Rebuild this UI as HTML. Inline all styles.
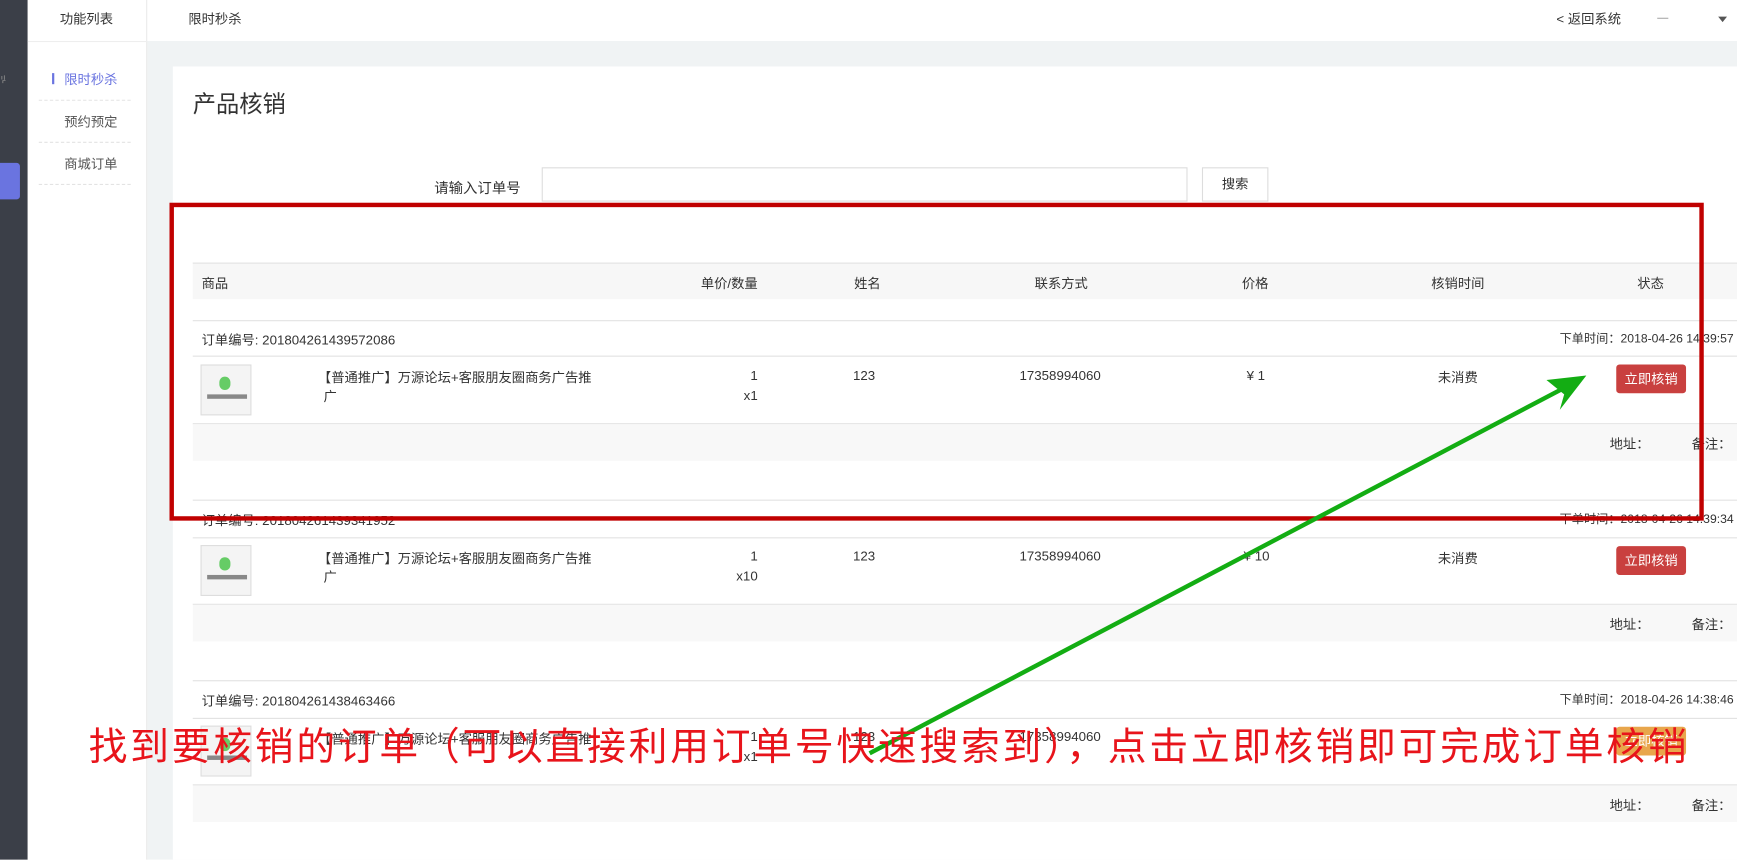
<!DOCTYPE html>
<html><head><meta charset="utf-8">
<style>
*{margin:0;padding:0;box-sizing:border-box}
html,body{width:1737px;height:860px;overflow:hidden;background:#fff}
#w{position:absolute;left:0;top:0;width:1568px;height:776px;transform:scale(1.10778);transform-origin:0 0;font-family:"Liberation Sans","Noto Sans CJK SC",sans-serif;font-size:12px;color:#333}
.a{position:absolute;white-space:nowrap}
.sb{left:0;top:0;width:25px;height:776px;background:#3b3f48}
.sn{left:25px;top:0;width:108px;height:776px;background:#fff;border-right:1px solid #e8e8e8}
.top{left:133px;top:0;width:1435px;height:37px;background:#fff}
.bg{left:133px;top:37px;width:1435px;height:739px;background:#f0f3f4}
.panel{left:156px;top:60px;width:1412px;height:716px;background:#fff}
.dash{position:absolute;left:35px;width:83px;border-top:1px dashed #e3e3e3}
.th{left:174px;top:237px;width:1394px;height:33px;background:#f7f7f7;border-top:1px solid #e2e2e2}
.hl{position:absolute;left:174px;width:1394px;border-top:1px solid #e2e2e2}
.ft{position:absolute;left:174px;width:1394px;height:33px;background:#f8f8f8}
.img{position:absolute;left:181px;width:46px;height:46px;border:1px solid #ddd;background:#f4f4f4}
.img i{position:absolute;left:16px;top:10px;width:10px;height:12px;border-radius:5px;background:#6c6}
.img b{position:absolute;left:5px;top:26px;width:36px;height:4px;background:#888}
.btn{position:absolute;left:1459px;width:63px;height:26px;background:#c9403f;border-radius:3px;color:#fff;text-align:center;line-height:26px}
.c{transform:translateX(-50%)}
.r{transform:translateX(-100%)}
</style></head><body><div id="w">
<div class="a sb"></div>
<div class="a" style="left:0;top:147px;width:18px;height:33px;background:#6a74e0;border-radius:0 3px 3px 0"></div>
<div class="a" style="left:0;top:65px;width:5px;height:10px;color:#888;font-size:11px;overflow:hidden">览</div>
<div class="a sn"></div>
<div class="a" style="left:25px;top:37px;width:108px;border-top:1px solid #eee"></div>
<div class="a" style="left:54px;top:8px;font-size:12px">功能列表</div>
<div class="a" style="left:47px;top:66px;width:2px;height:10px;background:#6a74e0"></div>
<div class="a" style="left:58px;top:63px;color:#6a74e0">限时秒杀</div>
<div class="dash" style="top:90px"></div>
<div class="a" style="left:58px;top:101px;color:#555">预约预定</div>
<div class="dash" style="top:128px"></div>
<div class="a" style="left:58px;top:139px;color:#555">商城订单</div>
<div class="dash" style="top:166px"></div>
<div class="a top"></div>
<div class="a" style="left:170px;top:8px">限时秒杀</div>
<div class="a" style="left:1405px;top:8px">&lt; 返回系统</div>
<div class="a" style="left:1496px;top:16px;width:10px;border-top:1px solid #aaa"></div>
<div class="a" style="left:1551px;top:15px;border:4px solid transparent;border-top:5px solid #555"></div>
<div class="a bg"></div>
<div class="a panel"></div>
<div class="a" style="left:174px;top:78px;font-size:21px;color:#333">产品核销</div>
<div class="a" style="left:470px;top:159px;font-size:13px" ><span class="a r" style="left:0;top:0">请输入订单号</span></div>
<div class="a" style="left:489px;top:151px;width:583px;height:31px;border:1px solid #ddd"></div>
<div class="a" style="left:1085px;top:151px;width:60px;height:31px;border:1px solid #ddd;text-align:center;line-height:29px">搜索</div>
<div class="a th"></div>
<div class="a" style="left:182px;top:247px">商品</div>
<div class="a r" style="left:684px;top:247px">单价/数量</div>
<div class="a c" style="left:783px;top:247px">姓名</div>
<div class="a c" style="left:958px;top:247px">联系方式</div>
<div class="a c" style="left:1133px;top:247px">价格</div>
<div class="a c" style="left:1316px;top:247px">核销时间</div>
<div class="a c" style="left:1490px;top:247px">状态</div>

<!-- order 1 -->
<div class="hl" style="top:289px"></div>
<div class="a" style="left:182px;top:298px">订单编号: 201804261439572086</div>
<div class="a r" style="left:1565px;top:297px;font-size:11px">下单时间：2018-04-26 14:39:57</div>
<div class="hl" style="top:321px"></div>
<div class="img" style="top:329px"><i></i><b></b></div>
<div class="a" style="left:287px;top:332px">【普通推广】万源论坛+客服朋友圈商务广告推</div>
<div class="a" style="left:292px;top:349px">广</div>
<div class="a r" style="left:684px;top:332px">1</div>
<div class="a r" style="left:684px;top:350px">x1</div>
<div class="a c" style="left:780px;top:332px">123</div>
<div class="a c" style="left:957px;top:332px">17358994060</div>
<div class="a r" style="left:1142px;top:332px">¥ 1</div>
<div class="a c" style="left:1316px;top:332px">未消费</div>
<div class="btn" style="top:329px">立即核销</div>
<div class="hl" style="top:382px"></div>
<div class="ft" style="top:383px"></div>
<div class="a" style="left:1453px;top:392px">地址：</div>
<div class="a" style="left:1527px;top:392px">备注：</div>

<!-- order 2 -->
<div class="hl" style="top:451px"></div>
<div class="a" style="left:182px;top:461px">订单编号: 201804261439341952</div>
<div class="a r" style="left:1565px;top:460px;font-size:11px">下单时间：2018-04-26 14:39:34</div>
<div class="hl" style="top:485px"></div>
<div class="img" style="top:492px"><i></i><b></b></div>
<div class="a" style="left:287px;top:495px">【普通推广】万源论坛+客服朋友圈商务广告推</div>
<div class="a" style="left:292px;top:512px">广</div>
<div class="a r" style="left:684px;top:495px">1</div>
<div class="a r" style="left:684px;top:513px">x10</div>
<div class="a c" style="left:780px;top:495px">123</div>
<div class="a c" style="left:957px;top:495px">17358994060</div>
<div class="a r" style="left:1146px;top:495px">¥ 10</div>
<div class="a c" style="left:1316px;top:495px">未消费</div>
<div class="btn" style="top:493px">立即核销</div>
<div class="hl" style="top:545px"></div>
<div class="ft" style="top:546px"></div>
<div class="a" style="left:1453px;top:555px">地址：</div>
<div class="a" style="left:1527px;top:555px">备注：</div>

<!-- order 3 -->
<div class="hl" style="top:614px"></div>
<div class="a" style="left:182px;top:624px">订单编号: 201804261438463466</div>
<div class="a r" style="left:1565px;top:623px;font-size:11px">下单时间：2018-04-26 14:38:46</div>
<div class="hl" style="top:648px"></div>
<div class="img" style="top:655px"><i></i><b></b></div>
<div class="a" style="left:287px;top:658px">【普通推广】万源论坛+客服朋友圈商务广告推</div>
<div class="a r" style="left:684px;top:658px">1</div>
<div class="a r" style="left:684px;top:676px">x1</div>
<div class="a c" style="left:780px;top:658px">123</div>
<div class="a c" style="left:957px;top:658px">17358994060</div>
<div class="btn" style="top:656px;background:#e8a64c">立即核销</div>
<div class="hl" style="top:708px"></div>
<div class="ft" style="top:709px"></div>
<div class="a" style="left:1453px;top:718px">地址：</div>
<div class="a" style="left:1527px;top:718px">备注：</div>

<!-- annotations -->
<div class="a" style="left:153px;top:183px;width:1385px;height:287px;border:4px solid #c00000"></div>
<svg class="a" style="left:0;top:0" width="1568" height="776">
<line x1="785" y1="680" x2="1418" y2="347" stroke="#13ad13" stroke-width="4"/>
<polygon points="1432,339 1396,343 1412,356 1408,370" fill="#13ad13"/>
</svg>
<div class="a" style="left:80px;top:646px;font-size:35px;letter-spacing:2.5px;color:#e8141b;font-family:'Liberation Sans','Noto Sans CJK SC',sans-serif">找到要核销的订单（可以直接利用订单号快速搜索到），点击立即核销即可完成订单核销</div>
</div></body></html>
